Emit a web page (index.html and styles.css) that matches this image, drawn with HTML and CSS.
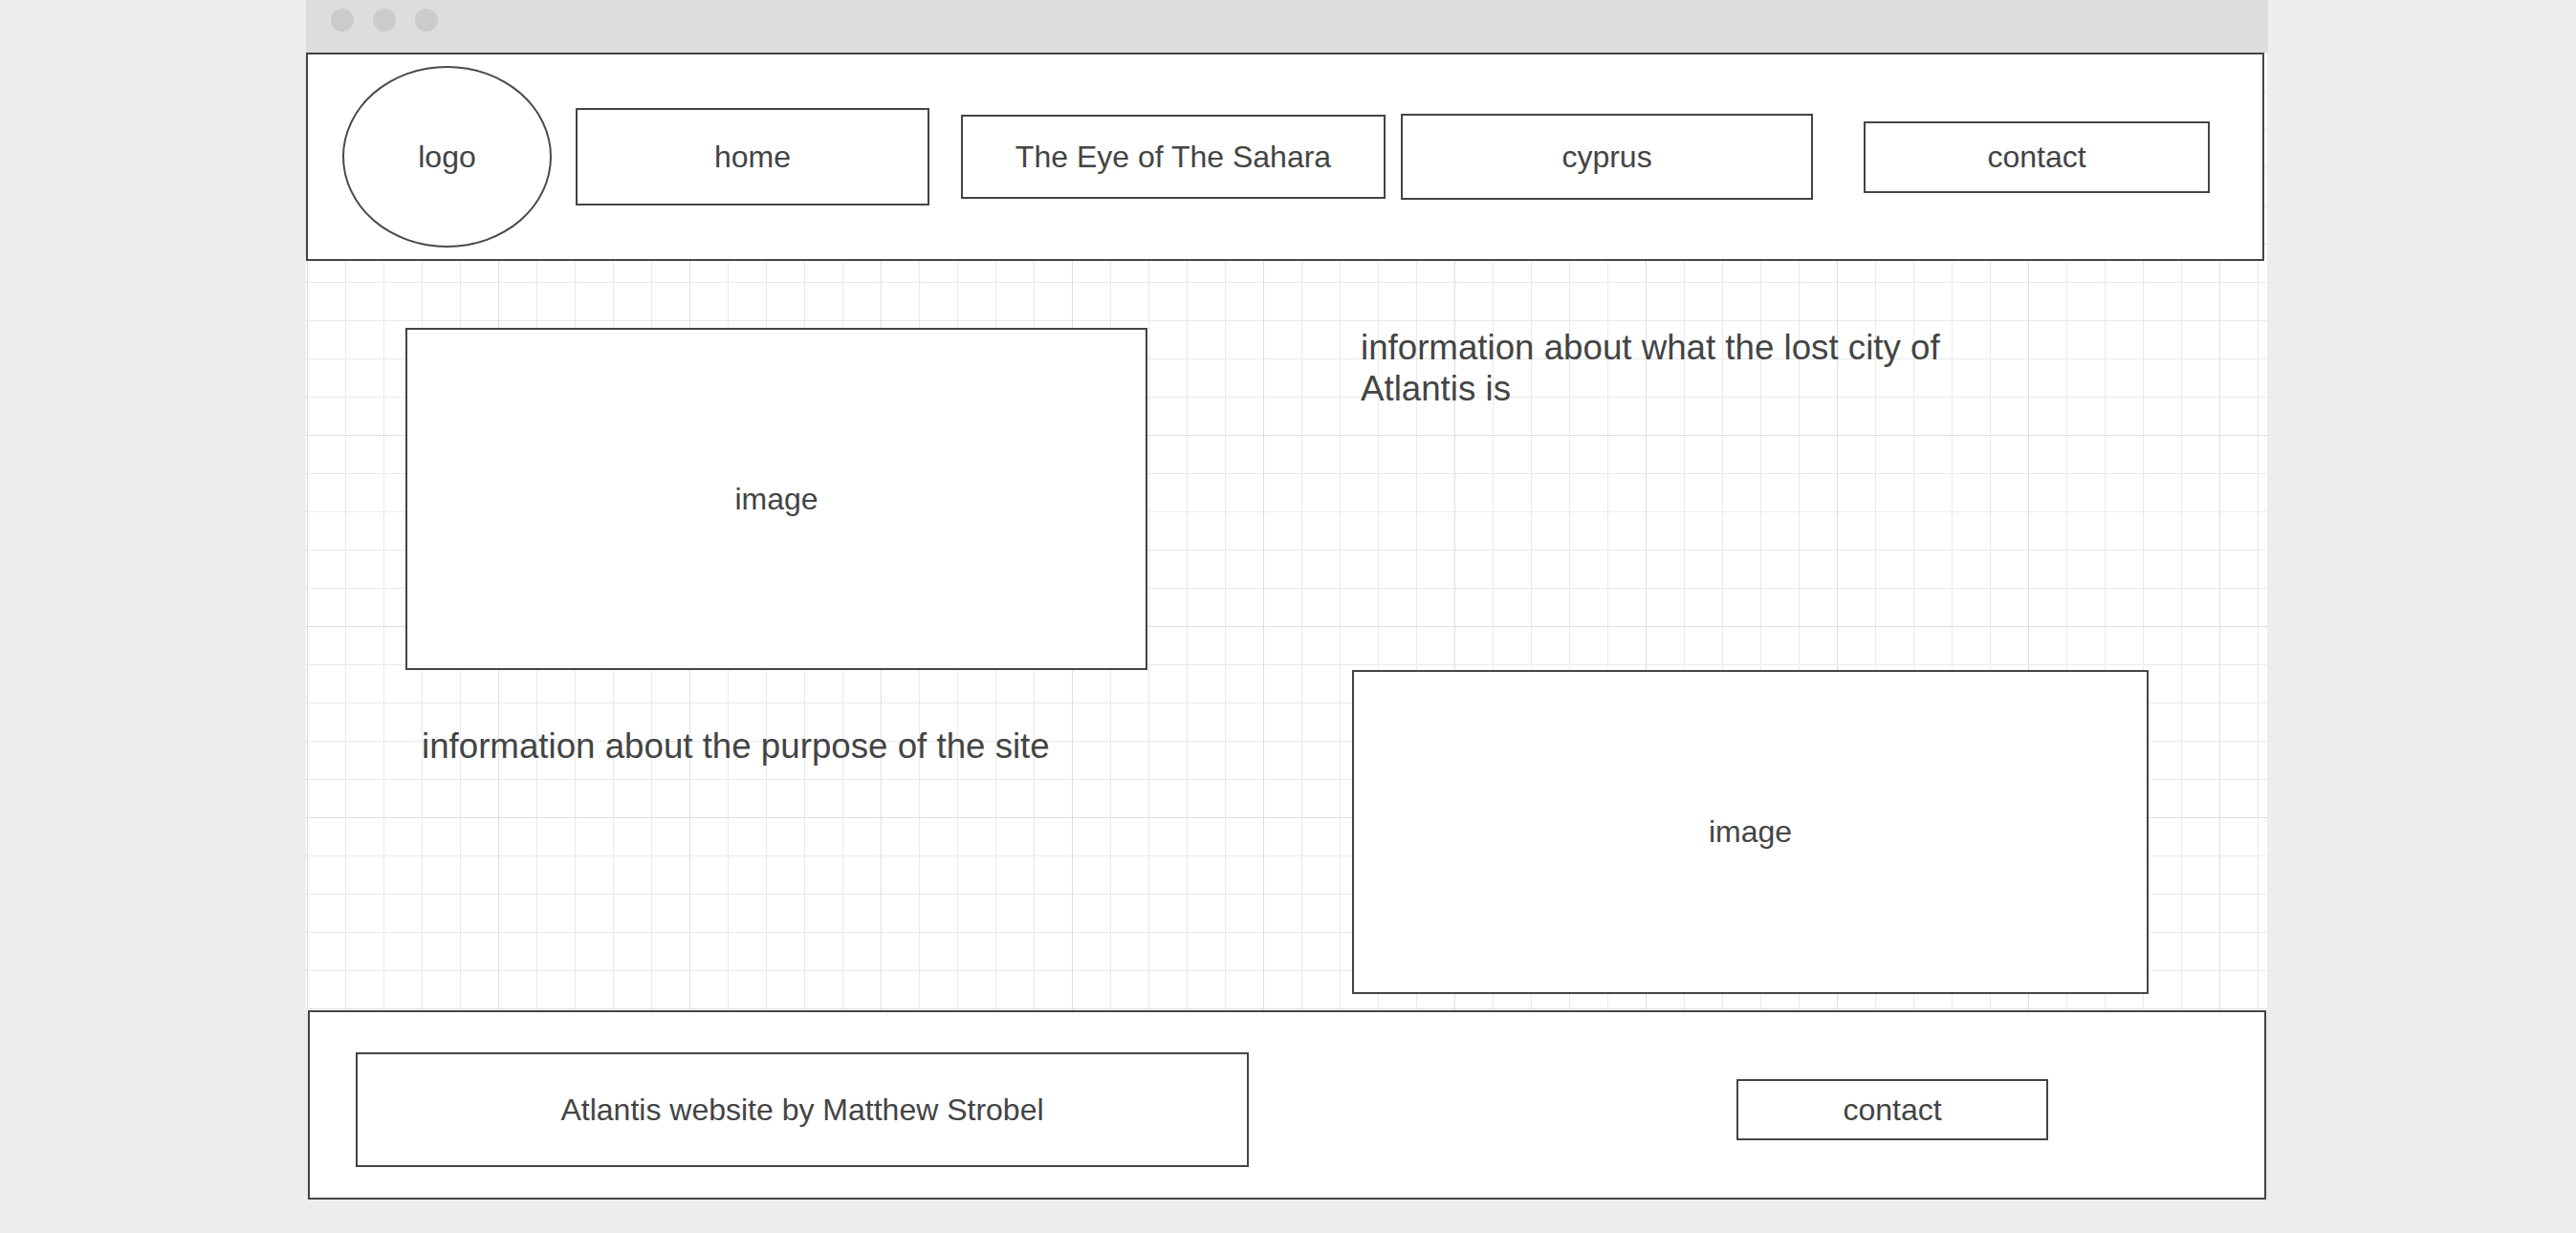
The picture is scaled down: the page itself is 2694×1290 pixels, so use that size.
FILE: index.html
```html
<!DOCTYPE html>
<html lang="en">
<head>
  <meta charset="UTF-8" />
  <meta name="viewport" content="width=device-width, initial-scale=1.0"/>
  <title>Atlantis</title>
  <link rel="stylesheet" href="styles.css">
</head>
<body>

  <div class="window">
    <div class="titlebar">
      <span class="dot"></span>
      <span class="dot"></span>
      <span class="dot"></span>
    </div>

    <div class="canvas">
      <header class="topbar">
        <div class="box logo">logo</div>
        <a class="box nav-home" href="#">home</a>
        <a class="box nav-sahara" href="#">The Eye of The Sahara</a>
        <a class="box nav-cyprus" href="#">cyprus</a>
        <a class="box nav-contact" href="#">contact</a>
      </header>

      <main class="content">
        <section class="col-left">
          <div class="box image-left">image</div>
          <p class="info info-purpose">information about the purpose of the site</p>
        </section>
        <section class="col-right">
          <p class="info info-city">information about what the lost city of Atlantis is</p>
          <div class="box image-right">image</div>
        </section>
      </main>
    </div>

    <footer class="footer">
      <div class="box credit">Atlantis website by Matthew Strobel</div>
      <a class="box footer-contact" href="#">contact</a>
    </footer>
  </div>

</body>
</html>
```

FILE: styles.css
```css
body {
  margin: 0;
  background: #ededed;
  font-family: "Liberation Sans", Arial, sans-serif;
  color: #444;
}

.window {
  width: 2052px;
  margin-left: 320px;
}

.titlebar {
  height: 55px;
  box-sizing: border-box;
  padding: 9px 0 0 26px;
  background: #ddd;
  display: flex;
  align-items: flex-start;
  gap: 20px;
}

.dot {
  width: 24px;
  height: 24px;
  border-radius: 50%;
  background: #cbcbcb;
}

/* graph paper behind the wireframe */
.canvas {
  height: 1002px;
  width: 2051px;
  background-color: #fff;
  background-image:
    linear-gradient(to right, #dedede 1px, transparent 1px),
    linear-gradient(to bottom, #dedede 1px, transparent 1px),
    linear-gradient(to right, #eaeaea 1px, transparent 1px),
    linear-gradient(to bottom, #eaeaea 1px, transparent 1px);
  background-size: 200px 200px, 200px 200px, 40px 40px, 40px 40px;
  background-position: 1px 0, 1px 0, 1px 0, 1px 0;
}

.box {
  box-sizing: border-box;
  border: 2px solid #444;
  background: #fff;
  display: flex;
  align-items: center;
  justify-content: center;
  font-size: 32px;
  color: #444;
  text-decoration: none;
}

.topbar {
  width: 2048px;
  height: 218px;
  box-sizing: border-box;
  border: 2px solid #444;
  background: #fff;
  display: flex;
  align-items: center;
  padding-left: 36px;
}

.logo {
  width: 219px;
  height: 190px;
  border-radius: 50%;
  border-color: #4a4a4a;
}

.nav-home {
  width: 370px;
  height: 102px;
  margin-left: 25px;
}

.nav-sahara {
  width: 444px;
  height: 88px;
  margin-left: 33px;
}

.nav-cyprus {
  width: 431px;
  height: 90px;
  margin-left: 16px;
}

.nav-contact {
  width: 362px;
  height: 75px;
  margin-left: 53px;
}

.content {
  display: grid;
  grid-template-columns: 990px 1fr;
  padding: 70px 0 0 104px;
}

.info {
  margin: 0;
  font-size: 36.7px;
  line-height: 1.16;
}

.image-left {
  width: 776px;
  height: 358px;
}

.info-purpose {
  margin: 59px 0 0 17px;
}

.info-city {
  width: 650px;
  margin-left: 9px;
}

.image-right {
  width: 833px;
  height: 339px;
  margin-top: 273px;
}

.footer {
  width: 2048px;
  height: 198px;
  margin-left: 2px;
  box-sizing: border-box;
  border: 2px solid #444;
  background: #fff;
  display: flex;
  align-items: center;
  padding: 10px 0 0 48px;
  box-shadow: 0 3px 4px rgba(0, 0, 0, 0.06);
}

.credit {
  width: 934px;
  height: 120px;
}

.footer-contact {
  width: 326px;
  height: 64px;
  margin-left: 510px;
}
```
